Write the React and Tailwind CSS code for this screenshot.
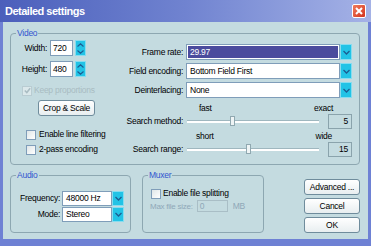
import React from 'react';

// small cyan spin box next to width/height
const Spin = () => (
  <div className="w-[11px] h-[16px] bg-[#22c3e6] border border-[#86dcef] flex flex-col items-center justify-center gap-[3px]">
    <svg width="7" height="4" viewBox="0 0 7 4">
      <path d="M0.5 3.5 L3.5 0.8 L6.5 3.5" fill="none" stroke="#1c5d92" strokeWidth="1.2" />
    </svg>
    <svg width="7" height="4" viewBox="0 0 7 4">
      <path d="M0.5 0.5 L3.5 3.2 L6.5 0.5" fill="none" stroke="#1c5d92" strokeWidth="1.2" />
    </svg>
  </div>
);

const Arrow = ({ h }) => (
  <div className={`w-[12px] ${h} bg-[#22c3e6] border border-[#86dcef] flex items-center justify-center`}>
    <svg width="7" height="5" viewBox="0 0 7 5">
      <path d="M0.5 1 L3.5 4 L6.5 1" fill="none" stroke="#1c5d92" strokeWidth="1.3" />
    </svg>
  </div>
);

const Select = ({ value, w, active }) => (
  <div className={`flex ${w} h-[16px]`}>
    <div className="flex-1 border border-[#7f9db9] bg-white p-[1px] flex">
      <div className={`flex-1 flex items-center pl-[2px] ${active ? 'bg-[#4b4b9d] text-white' : ''}`}>{value}</div>
    </div>
    <Arrow h="h-[16px]" />
  </div>
);

const Check = ({ checked, disabled }) => (
  <div className={`w-[10px] h-[10px] shrink-0 border ${disabled ? 'border-[#b9ccd2] bg-[#dbe8eb]' : 'border-[#7f9db9] bg-gradient-to-br from-[#dfe6e8] to-white'} flex items-center justify-center`}>
    {checked && (
      <svg width="7" height="7" viewBox="0 0 7 7">
        <path d="M0.8 3.5 L2.8 5.5 L6.2 1.2" fill="none" stroke="#a9bcc2" strokeWidth="1.5" />
      </svg>
    )}
  </div>
);

const Slider = ({ pos }) => (
  <div className="relative w-[132px] h-[16px] flex items-center">
    <div className="w-full h-[3px] border-t border-[#9fb7bf] bg-white" />
    <div className="absolute top-[3px] w-[5px] h-[10px] bg-[#eef4f5] border border-[#90a8b0]" style={{ left: pos }} />
  </div>
);

const Btn = ({ children }) => (
  <div className="h-[16px] w-full flex items-center justify-center rounded-[3px] border border-[#6f8c9c] bg-gradient-to-b from-white to-[#e8eef0]">
    {children}
  </div>
);

export default function App() {
  return (
    <div className="w-[371px] h-[246px] flex flex-col overflow-hidden whitespace-nowrap font-['Liberation_Sans',sans-serif] text-[8.5px] tracking-[-0.25px] leading-[11px] text-black">
      {/* title bar */}
      <div className="h-[22px] flex items-center pl-[5px] pr-[5px] bg-gradient-to-r from-[#4b5fbb] via-[#7083d0] to-[#a5b2e6]">
        <span className="text-white font-bold text-[11px] tracking-[-0.5px] leading-[14px]">Detailed settings</span>
        <div className="ml-auto w-[14px] h-[14px] rounded-[2px] border border-white bg-gradient-to-br from-[#f07a5a] to-[#d2301c] flex items-center justify-center">
          <svg width="8" height="8" viewBox="0 0 8 8">
            <path d="M1 1 L7 7 M7 1 L1 7" stroke="white" strokeWidth="2" />
          </svg>
        </div>
      </div>

      {/* body */}
      <div className="flex-1 bg-[#c4dbe0] border-x-[3px] border-b-[7px] border-[#6e81d4] pt-[6px] pl-[7px] pr-[8px]">
        <fieldset className="border border-[#8da7b1] rounded-[4px] pb-[7px]">
          <legend className="ml-[5px] px-[1px] text-[#3155cf]">Video</legend>
          <div className="flex">
            {/* left column */}
            <div className="w-[113px] flex flex-col">
              <div className="mt-[1px] flex items-center h-[16px]">
                <span className="w-[36px] text-right">Width:</span>
                <div className="ml-[3px] w-[23px] h-[16px] bg-white border border-[#7f9db9] flex items-center pl-[2px]">720</div>
                <div className="ml-[2px]"><Spin /></div>
              </div>
              <div className="mt-[5px] flex items-center h-[16px]">
                <span className="w-[36px] text-right">Height:</span>
                <div className="ml-[3px] w-[23px] h-[16px] bg-white border border-[#7f9db9] flex items-center pl-[2px]">480</div>
                <div className="ml-[2px]"><Spin /></div>
              </div>
              <div className="mt-[8px] flex items-center h-[11px] pl-[11px] gap-[2px] text-[#a9bcc2]">
                <Check checked disabled />
                <span>Keep proportions</span>
              </div>
              <div className="mt-[4px] ml-[27px] w-[57px]">
                <Btn>Crop &amp; Scale</Btn>
              </div>
              <div className="mt-[13px] flex items-center h-[11px] pl-[15px] gap-[3px]">
                <Check />
                <span>Enable line filtering</span>
              </div>
              <div className="mt-[4px] flex items-center h-[11px] pl-[15px] gap-[3px]">
                <Check />
                <span>2-pass encoding</span>
              </div>
            </div>

            {/* right column */}
            <div className="w-[235px] flex flex-col pt-[5px]">
              <div className="flex items-center h-[16px]">
                <span className="w-[59px] text-right">Frame rate:</span>
                <div className="ml-[3px]"><Select value="29.97" w="w-[166px]" active /></div>
              </div>
              <div className="mt-[3px] flex items-center h-[16px]">
                <span className="w-[59px] text-right">Field encoding:</span>
                <div className="ml-[3px]"><Select value="Bottom Field First" w="w-[166px]" /></div>
              </div>
              <div className="mt-[3px] flex items-center h-[16px]">
                <span className="w-[59px] text-right">Deinterlacing:</span>
                <div className="ml-[3px]"><Select value="None" w="w-[166px]" /></div>
              </div>
              <div className="mt-[5px] h-[10px] pl-[75px] w-[209px] flex justify-between leading-[10px]">
                <span>fast</span>
                <span>exact</span>
              </div>
              <div className="flex items-center h-[16px]">
                <span className="w-[59px] text-right">Search method:</span>
                <div className="ml-[4px]"><Slider pos={43} /></div>
                <div className="ml-[9px] w-[24px] h-[15px] border border-[#8aa3ac] flex items-center justify-end pr-[3px]">5</div>
              </div>
              <div className="mt-[2px] h-[10px] pl-[72px] w-[208px] flex justify-between leading-[10px]">
                <span>short</span>
                <span>wide</span>
              </div>
              <div className="flex items-center h-[16px]">
                <span className="w-[59px] text-right">Search range:</span>
                <div className="ml-[4px]"><Slider pos={59} /></div>
                <div className="ml-[9px] w-[24px] h-[15px] border border-[#8aa3ac] flex items-center justify-end pr-[3px]">15</div>
              </div>
            </div>
          </div>
        </fieldset>

        <div className="mt-[5px] flex items-start">
          <fieldset className="w-[121px] h-[63px] border border-[#8da7b1] rounded-[4px]">
            <legend className="ml-[5px] px-[1px] text-[#3155cf]">Audio</legend>
            <div className="mt-[10px] flex items-center h-[15px]">
              <span className="w-[49px] text-right">Frequency:</span>
              <div className="ml-[2px] flex h-[15px] w-[62px]">
                <div className="flex-1 bg-white border border-[#7f9db9] flex items-center pl-[3px]">48000 Hz</div>
                <Arrow h="h-[15px]" />
              </div>
            </div>
            <div className="mt-[1px] flex items-center h-[15px]">
              <span className="w-[49px] text-right">Mode:</span>
              <div className="ml-[2px] flex h-[15px] w-[62px]">
                <div className="flex-1 bg-white border border-[#7f9db9] flex items-center pl-[3px]">Stereo</div>
                <Arrow h="h-[15px]" />
              </div>
            </div>
          </fieldset>

          <fieldset className="ml-[11px] w-[122px] h-[63px] border border-[#8da7b1] rounded-[4px]">
            <legend className="ml-[5px] px-[1px] text-[#3155cf]">Muxer</legend>
            <div className="mt-[7px] flex items-center h-[11px] pl-[8px] gap-[2px]">
              <Check />
              <span>Enable file splitting</span>
            </div>
            <div className="mt-[1px] flex items-center h-[12px] pl-[7px] text-[#8fa8b8]">
              <span className="text-[8px]">Max file size:</span>
              <div className="ml-[4px] w-[31px] h-[12px] border border-[#a9bec6] flex items-center pl-[2px]">0</div>
              <span className="ml-[5px]">MB</span>
            </div>
          </fieldset>

          <div className="ml-auto mt-[9px] w-[56px] flex flex-col gap-[3px]">
            <Btn>Advanced ...</Btn>
            <Btn>Cancel</Btn>
            <Btn>OK</Btn>
          </div>
        </div>
      </div>
    </div>
  );
}
